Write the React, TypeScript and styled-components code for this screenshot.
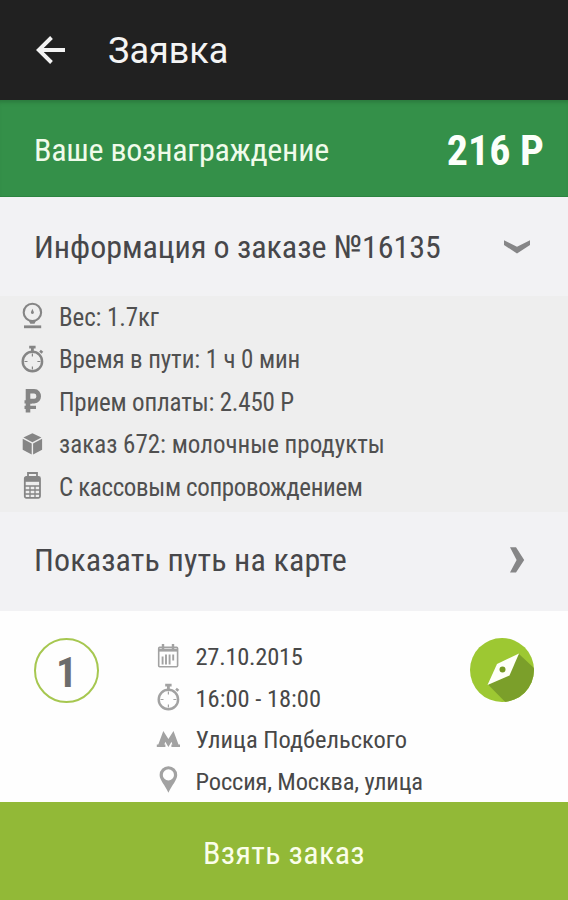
import React from 'react';
import styled, { createGlobalStyle } from 'styled-components';

const GlobalStyle = createGlobalStyle`
  *, *::before, *::after { box-sizing: border-box; }
  body { margin: 0; background: #fff; }
`;

const condensed = `'Roboto Condensed', Roboto, 'Liberation Sans', sans-serif`;

const Screen = styled.main`
  display: flex;
  flex-direction: column;
  width: 568px;
  height: 900px;
  overflow: hidden;
  background: #fefefe;
  font-family: ${condensed};
  white-space: nowrap;
`;

const TopBar = styled.header`
  display: flex;
  align-items: center;
  flex: 0 0 100px;
  gap: 42px;
  padding: 0 35px;
  background: #212121;
`;

const Title = styled.h1`
  margin: 2px 0 0;
  color: #f4f4f4;
  font: 400 36px/42px Roboto, sans-serif;
`;

const RewardBar = styled.section`
  display: flex;
  align-items: center;
  justify-content: space-between;
  flex: 0 0 97px;
  padding: 4px 24px 0 34px;
  background: #349049;
  box-shadow: inset 0 5px 4px -3px #2a783c, inset 0 -1px 0 #2c8440;
  color: #f0fbea;
`;

const RewardLabel = styled.span`
  margin-top: -2px;
  font-size: 32px;
  letter-spacing: -0.25px;
`;

const RewardAmount = styled.strong`
  color: #fcfffa;
  font-size: 42px;
  font-weight: 700;
`;

const SectionLink = styled.div<{ $shift: number; $spacing?: number }>`
  display: flex;
  align-items: center;
  justify-content: space-between;
  flex: 0 0 99px;
  padding: 0 38px ${p => p.$shift}px 34px;
  background: #f2f2f4;
  color: #47474a;
  font-size: 32px;
  letter-spacing: ${p => p.$spacing ?? 0}px;
`;

const Details = styled.ul`
  flex: 0 0 216px;
  margin: 0;
  padding: 0 0 0 19px;
  background: #eeeeee;
  color: #505050;
  list-style: none;
`;

const InfoRow = styled.li<{ $height: number; $gap: number; $size: number; $spacing?: number }>`
  display: flex;
  align-items: center;
  gap: ${p => p.$gap}px;
  height: ${p => p.$height}px;
  font-size: ${p => p.$size}px;
  letter-spacing: ${p => p.$spacing ?? 0}px;
`;

const Icon = styled.svg<{ $tone: string }>`
  flex: none;
  width: 27px;
  height: 28px;
  overflow: visible;
  color: ${p => p.$tone};
`;

const Stop = styled.section`
  display: flex;
  align-items: flex-start;
  flex: 0 0 191px;
  padding: 25px 33px 0 34px;
`;

const StopNumber = styled.div`
  display: flex;
  align-items: center;
  justify-content: center;
  width: 65px;
  height: 65px;
  margin-top: 2px;
  padding: 4px 0 0 0;
  border: 2.5px solid #a6c750;
  border-radius: 50%;
  color: #6c6c6c;
  font-size: 42px;
  font-weight: 700;
`;

const StopDetails = styled.ul`
  flex: 1;
  margin: 0 0 0 56px;
  padding: 0;
  color: #484848;
  list-style: none;
`;

const Compass = styled.svg`
  flex: none;
  width: 66px;
  height: 66px;
  margin-top: 1px;
`;

const TakeOrder = styled.button`
  flex: 0 0 98px;
  margin: 0;
  padding: 4px 0 0;
  border: 0;
  background: #92b937;
  color: #fafee9;
  font: 400 32px ${condensed};
  letter-spacing: 0.35px;
`;

const DARK = '#858585';
const LIGHT = '#a2a2a2';

const ScaleIcon = () => (
  <Icon viewBox="0 0 27 28" $tone={DARK} fill="none" stroke="currentColor">
    <circle cx="13.4" cy="9.4" r="8.7" strokeWidth="2.1" />
    <path d="M9.5 17.3h7.8l-1.8 3.5h-4.2z" fill="currentColor" stroke="none" />
    <path d="M5 23.8h17.2" strokeWidth="2.8" />
    <path d="M13.4 5.8l1.3 3a1.500 1.500 0 1 1-2.600 0z" fill="currentColor" stroke="none" />
  </Icon>
);

const StopwatchIcon = ({ tone }: { tone: string }) => (
  <Icon viewBox="0 0 27 28" $tone={tone} fill="none" stroke="currentColor">
    <circle cx="13.4" cy="15.5" r="9.7" strokeWidth="2.4" />
    <path d="M10.200 1.200h6.400M13.400 2v4" strokeWidth="2.800" />
    <path d="M21 4.700l2.400 2" strokeWidth="2.600" />
    <path d="M13.400 7.500v3M13.400 20.500v3M5.500 15.500h3M18.400 15.500h3" strokeWidth="1.200" />
  </Icon>
);

const RubleIcon = () => (
  <Icon viewBox="0 0 27 28" $tone={DARK} fill="none" stroke="currentColor">
    <path d="M9 24.5V3.300h6.200c6 0 6 9.800 0 9.800H9" strokeWidth="4.600" />
    <path d="M5.500 13.800H13M5.500 19.300H17" strokeWidth="3.200" />
  </Icon>
);

const BoxIcon = () => (
  <Icon viewBox="0 0 27 28" $tone={DARK} fill="currentColor">
    <path d="M13.4 2.200l9 4.200-9 4.900-9-4.900z" />
    <path d="M3.700 7.700l9 4.800v11.100l-9-4.900zM14.100 12.500l9-4.800v11l-9 4.900z" />
  </Icon>
);

const TerminalIcon = () => (
  <Icon viewBox="0 0 27 28" $tone={DARK} fill="none" stroke="currentColor">
    <path d="M9 4V0h9v4" strokeWidth="1.800" />
    <rect x="5.800" y="4" width="15.200" height="20.800" rx="1.500" strokeWidth="1.800" />
    <path d="M6 6.600h15" strokeWidth="4.400" />
    <path d="M6 13h15M6 17h15M6 21h15M11 12.500v12M16 12.500v12" strokeWidth="1.300" />
  </Icon>
);

const CalendarIcon = () => (
  <Icon viewBox="0 0 27 28" $tone={LIGHT} fill="none" stroke="currentColor">
    <rect x="3.700" y="4.400" width="18.900" height="19.300" rx="1" strokeWidth="1.600" />
    <path d="M3.700 7.200h18.900" strokeWidth="2.800" />
    <path d="M8 1v5M18 1v5" strokeWidth="2.400" />
    <path d="M7.600 13.500v8M11 11.500v10M14.600 11.500v10M18.200 11.500v6" strokeWidth="1.900" />
  </Icon>
);

const MetroIcon = () => (
  <Icon viewBox="0 0 27 28" $tone={LIGHT} fill="currentColor">
    <path d="M8.300 5l5.100 8 5.100-8 5 13.600H25V21h-8.600v-2.400h1l-.9-2.800-3.100 5.200-3.100-5.200-.9 2.800h1V21H1.800v-2.400h1.500z" />
  </Icon>
);

const PinIcon = () => (
  <Icon viewBox="0 0 27 28" $tone={LIGHT} fill="currentColor">
    <path
      fillRule="evenodd"
      d="M13.4-.8a8.700 8.700 0 0 1 8.800 8.800c0 5-5.300 10.200-8.800 17.700C10 18.200 4.600 13 4.600 8a8.700 8.700 0 0 1 8.800-8.800zm0 3.100a5.600 5.600 0 1 0 0 11.200 5.600 5.600 0 0 0 0-11.200z"
    />
  </Icon>
);

const ChevronDown = () => (
  <svg width="26" height="14" viewBox="0 0 26 14">
    <path d="M0 .3l13 6.500L26 .3V5L13 13.500 0 5z" fill="#868687" />
  </svg>
);

const ChevronRight = () => (
  <svg width="20" height="26" viewBox="0 0 20 26">
    <path d="M0 .3h6l8.200 12.700L6 25.500H0l6.600-12.500z" fill="#868687" />
  </svg>
);

const BackArrow = () => (
  <svg width="31" height="30" viewBox="0 0 31 30" fill="none" stroke="#f4f4f4" strokeWidth="3.900">
    <path d="M16.500 2.500L3.800 15l12.700 12.500M3.800 15H30" />
  </svg>
);

const orderRows = [
  { icon: <ScaleIcon />, text: 'Вес: 1.7кг', spacing: -0.1 },
  { icon: <StopwatchIcon tone={DARK} />, text: 'Время в пути: 1 ч 0 мин', spacing: -0.1 },
  { icon: <RubleIcon />, text: 'Прием оплаты: 2.450 Р', spacing: -0.18 },
  { icon: <BoxIcon />, text: 'заказ 672: молочные продукты', spacing: 0 },
  { icon: <TerminalIcon />, text: 'С кассовым сопровождением', spacing: -0.36 },
];

const stopRows = [
  { icon: <CalendarIcon />, text: '27.10.2015', spacing: -0.25 },
  { icon: <StopwatchIcon tone={LIGHT} />, text: '16:00 - 18:00', spacing: 0 },
  { icon: <MetroIcon />, text: 'Улица Подбельского', spacing: 0 },
  { icon: <PinIcon />, text: 'Россия, Москва, улица', spacing: -0.16 },
];

export default function App() {
  return (
    <Screen>
      <GlobalStyle />
      <TopBar>
        <BackArrow />
        <Title>Заявка</Title>
      </TopBar>
      <RewardBar>
        <RewardLabel>Ваше вознаграждение</RewardLabel>
        <RewardAmount>216 Р</RewardAmount>
      </RewardBar>
      <SectionLink $shift={0} $spacing={-0.03}>
        <span>Информация о заказе №16135</span>
        <ChevronDown />
      </SectionLink>
      <Details>
        {orderRows.map(row => (
          <InfoRow key={row.text} $height={42.5} $gap={13} $size={25} $spacing={row.spacing}>
            {row.icon}
            <span>{row.text}</span>
          </InfoRow>
        ))}
      </Details>
      <SectionLink $shift={3} $spacing={0.14}>
        <span>Показать путь на карте</span>
        <ChevronRight />
      </SectionLink>
      <Stop>
        <StopNumber>1</StopNumber>
        <StopDetails>
          {stopRows.map(row => (
            <InfoRow key={row.text} $height={41.5} $gap={13.5} $size={24.5} $spacing={row.spacing}>
              {row.icon}
              <span>{row.text}</span>
            </InfoRow>
          ))}
        </StopDetails>
        <Compass viewBox="0 0 66 66">
          <defs>
            <clipPath id="dial">
              <circle cx="33" cy="33" r="32" />
            </clipPath>
          </defs>
          <circle cx="33" cy="33" r="32" fill="#9dc832" />
          <path d="M50 17l30 28v30H46L19 47.500z" fill="#7b9f2a" clipPath="url(#dial)" />
          <path d="M50 16.500L40.500 38.500 18.500 48 28 27z" fill="#fefff8" />
          <circle cx="33.500" cy="32.500" r="3" fill="#769922" />
        </Compass>
      </Stop>
      <TakeOrder type="button">Взять заказ</TakeOrder>
    </Screen>
  );
}
